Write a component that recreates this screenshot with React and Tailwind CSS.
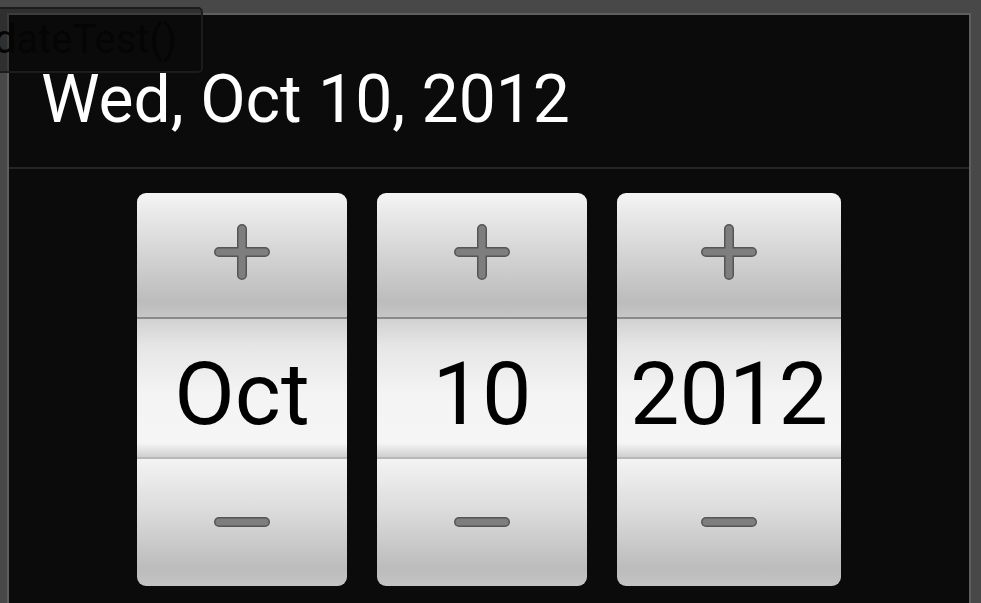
import React from "react";

const PlusIcon = () => (
  <svg width="58" height="58" viewBox="0 0 58 58">
    <path d="M6 29 H52 M29 6 V52" stroke="#555555" strokeWidth="10" strokeLinecap="round" fill="none" />
    <path d="M6 29 H52 M29 6 V52" stroke="#7e7e7e" strokeWidth="7" strokeLinecap="round" fill="none" />
  </svg>
);

const MinusIcon = () => (
  <svg width="58" height="14" viewBox="0 0 58 14">
    <path d="M6 7 H52" stroke="#555555" strokeWidth="10" strokeLinecap="round" fill="none" />
    <path d="M6 7 H52" stroke="#7e7e7e" strokeWidth="7" strokeLinecap="round" fill="none" />
  </svg>
);

const Spinner = ({ value, width }) => (
  <div className={`flex flex-col ${width}`}>
    <div className="h-[124px] rounded-t-[9px] bg-[linear-gradient(to_bottom,#f4f4f4,#dadada_40%,#bcbcbc_88%,#c6c6c6)] flex items-center justify-center pb-[6px]">
      <PlusIcon />
    </div>
    <div className="h-[140px] border-t-2 border-[#8a8a8a] bg-[linear-gradient(to_bottom,#d2d2d2,#e6e6e6_20%,#f4f4f4_55%,#f5f5f5_90%,#cfcfcf)] flex justify-center pt-[31px]">
      <span className="text-[88px] leading-none text-black">{value}</span>
    </div>
    <div className="h-[129px] rounded-b-[9px] border-t-2 border-[#b8b8b8] bg-[linear-gradient(to_bottom,#f3f3f3,#dcdcdc_40%,#bcbcbc_86%,#c4c4c4)] flex items-center justify-center pb-[2px]">
      <MinusIcon />
    </div>
  </div>
);

export default function App() {
  return (
    <div
      className="relative w-[981px] h-[603px] overflow-hidden bg-[#484848] pt-[13px] pl-[7px] pr-[10px]"
      style={{ fontFamily: "Roboto, 'Noto Sans', sans-serif" }}
    >
      <div className="h-[620px] border-2 border-[#5e5e5e] bg-[#0b0b0b]">
        <div className="h-[152px] pt-[52px] pl-[32px]">
          <span className="text-[66px] leading-none text-white">Wed, Oct 10, 2012</span>
        </div>
        <div className="h-[2px] bg-[#252525]" />
        <div className="flex gap-[30px] pl-[128px] pt-[24px]">
          <Spinner value="Oct" width="w-[210px]" />
          <Spinner value="10" width="w-[210px]" />
          <Spinner value="2012" width="w-[224px]" />
        </div>
      </div>

      <div className="absolute left-[-22px] top-[7px] w-[225px] h-[66px] rounded-[5px] border-2 border-[#1c1c1c] bg-[#0a0a0a]/40 flex items-center justify-end pr-[24px]">
        <span className="text-[40px] leading-none text-[#050505]">updateTest()</span>
      </div>
    </div>
  );
}
